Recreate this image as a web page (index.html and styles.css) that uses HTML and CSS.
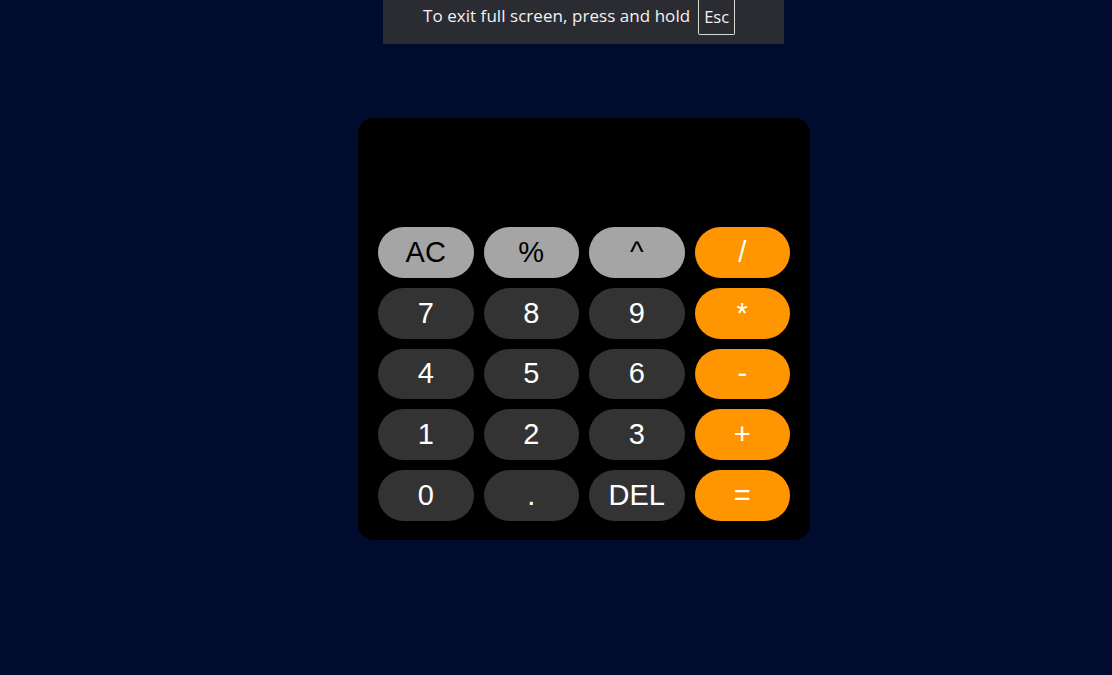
FILE: index.html
```html
<!DOCTYPE html>
<html>
<head>
<meta charset="utf-8">
<link rel="stylesheet" href="styles.css">
</head>
<body>
<div class="banner-wrap">
  <div class="banner"><span class="msg">To exit full screen, press and hold</span><span class="key">Esc</span></div>
</div>
<main class="stage">
  <div class="calc">
    <div class="display"></div>
    <div class="keys">
      <button class="k light">AC</button>
      <button class="k light">%</button>
      <button class="k light">^</button>
      <button class="k op">/</button>
      <button class="k">7</button>
      <button class="k">8</button>
      <button class="k">9</button>
      <button class="k op">*</button>
      <button class="k">4</button>
      <button class="k">5</button>
      <button class="k">6</button>
      <button class="k op">-</button>
      <button class="k">1</button>
      <button class="k">2</button>
      <button class="k">3</button>
      <button class="k op">+</button>
      <button class="k">0</button>
      <button class="k">.</button>
      <button class="k">DEL</button>
      <button class="k op">=</button>
    </div>
  </div>
</main>
</body>
</html>
```
FILE: styles.css
```css
html, body {
  margin: 0;
  padding: 0;
  height: 100%;
}
body {
  background: #000b2e;
  font-family: "Liberation Sans", Arial, sans-serif;
  display: flex;
  flex-direction: column;
  align-items: center;
  padding-left: 56px;
  box-sizing: border-box;
}
.banner-wrap {
  position: absolute;
  top: 0;
  left: 55px;
  right: 0;
  display: flex;
  justify-content: center;
}
.banner {
  width: 401px;
  height: 44px;
  box-sizing: border-box;
  background: #2a2c32;
  color: #f2f2f2;
  font-family: "Open Sans", "DejaVu Sans", sans-serif;
  font-size: 17px;
  display: flex;
  justify-content: flex-start;
  align-items: flex-start;
  padding-top: 4px;
  padding-left: 40px;
  white-space: nowrap;
}
.msg {
  letter-spacing: 0.05px;
}
.key {
  display: inline-block;
  border: 1px solid #d8d8d8;
  border-top: none;
  border-radius: 0 0 2px 2px;
  padding: 0 5px;
  margin-left: 8px;
  margin-top: -4px;
  height: 35px;
  line-height: 33px;
  box-sizing: border-box;
  font-size: 16.5px;
}
.stage {
  padding-top: 118px;
}
.calc {
  width: 452px;
  box-sizing: border-box;
  background: #000;
  border-radius: 16px;
  padding: 20px 20px 19px;
}
.display {
  height: 79px;
  margin-bottom: 10px;
}
.keys {
  display: grid;
  grid-template-columns: repeat(4, 1fr);
  column-gap: 10px;
  row-gap: 10px;
}
.k {
  height: 50.75px;
  border: none;
  border-radius: 26px;
  background: #333333;
  color: #ffffff;
  font-family: "Liberation Sans", Arial, sans-serif;
  font-size: 29px;
  padding: 0;
  margin: 0;
}
.k.light {
  background: #a5a5a5;
  color: #000;
}
.k.op {
  background: #ff9500;
  color: #fff;
}
```
